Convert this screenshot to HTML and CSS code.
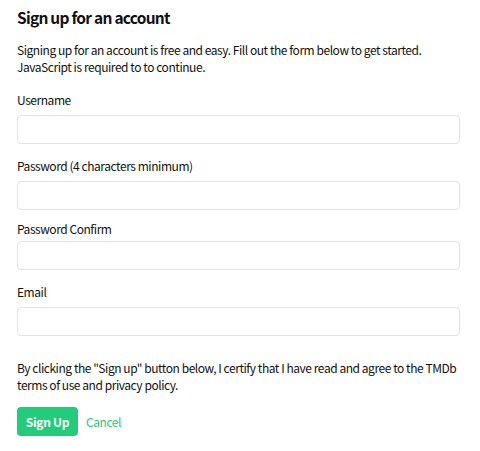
FILE: index.html
```html
<!DOCTYPE html>
<html lang="en">
<head>
<meta charset="utf-8">
<title>Sign up for an account</title>
<link rel="stylesheet" href="styles.css">
</head>
<body>
<main class="page">
  <h2 class="title">Sign up for an account</h2>
  <p class="intro">Signing up for an account is free and easy. Fill out the form below to get started. JavaScript is required to to continue.</p>
  <form class="form">
    <div class="field">
      <label class="label" for="username">Username</label>
      <input class="input" id="username" type="text">
    </div>
    <div class="field field-before-tight">
      <label class="label" for="password">Password (4 characters minimum)</label>
      <input class="input" id="password" type="password">
    </div>
    <div class="field field-tight">
      <label class="label" for="password_confirm">Password Confirm</label>
      <input class="input" id="password_confirm" type="password">
    </div>
    <div class="field field-last">
      <label class="label" for="email">Email</label>
      <input class="input" id="email" type="email">
    </div>
    <p class="legal">By clicking the "Sign up" button below, I certify that I have read and agree to the TMDb terms of use and privacy policy.</p>
    <div class="actions">
      <button class="btn" type="button">Sign Up</button>
      <a class="cancel" href="#">Cancel</a>
    </div>
  </form>
</main>
</body>
</html>
```
FILE: styles.css
```css
* { box-sizing: border-box; }
html, body {
  margin: 0;
  background: #fff;
}
body {
  font-family: "Noto Sans CJK SC", Lato, sans-serif;
  color: #111;
  font-size: 12px;
  letter-spacing: -0.45px;
}
.page {
  padding: 0 20px 0 17px;
}
.title {
  margin: 0;
  padding-top: 5px;
  font-size: 15.5px;
  line-height: 24px;
  font-weight: 600;
  letter-spacing: -0.75px;
  color: #111;
}
.intro {
  margin: 12px 0 0;
  font-size: 12px;
  line-height: 17px;
}
.form {
  display: flex;
  flex-direction: column;
  margin-top: 16px;
}
.field {
  display: flex;
  flex-direction: column;
  margin-bottom: 13px;
}
.field-before-tight { margin-bottom: 10px; }
.field-last { margin-bottom: 0; }
.label {
  font-size: 12px;
  line-height: 17px;
  margin-bottom: 7px;
}
.field-tight .label { margin-bottom: 4px; }
.input {
  height: 29px;
  width: 100%;
  border: 1px solid #e2e2e2;
  border-radius: 4px;
  background: #fff;
  outline: none;
}
.legal {
  margin: 23px 0 0;
  font-size: 12px;
  line-height: 17px;
}
.actions {
  display: flex;
  align-items: center;
  gap: 8px;
  margin-top: 14px;
}
.btn {
  height: 29px;
  width: 61px;
  padding: 0;
  border: 0;
  border-radius: 4px;
  background: #22cc7a;
  color: #fff;
  font-family: inherit;
  font-size: 12px;
  letter-spacing: -0.3px;
  font-weight: 700;
}
.cancel {
  color: #22cc7a;
  text-decoration: none;
  font-size: 12px;
}
```
